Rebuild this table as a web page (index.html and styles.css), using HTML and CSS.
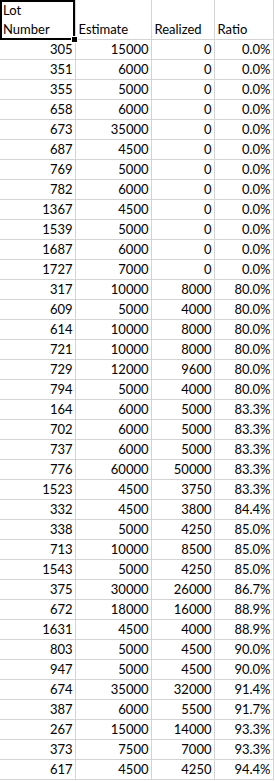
FILE: index.html
```html
<!DOCTYPE html>
<html>
<head>
<meta charset="utf-8">
<link rel="stylesheet" href="styles.css">
</head>
<body>
<div class="sheet">
<table class="grid">
<colgroup><col class="c-a"><col class="c-b"><col class="c-c"><col class="c-d"></colgroup>
<thead>
<tr><th>Lot<br>Number</th><th>Estimate</th><th>Realized</th><th>Ratio</th></tr>
</thead>
<tbody>
<tr><td>305</td><td>15000</td><td>0</td><td>0.0%</td></tr>
<tr><td>351</td><td>6000</td><td>0</td><td>0.0%</td></tr>
<tr><td>355</td><td>5000</td><td>0</td><td>0.0%</td></tr>
<tr><td>658</td><td>6000</td><td>0</td><td>0.0%</td></tr>
<tr><td>673</td><td>35000</td><td>0</td><td>0.0%</td></tr>
<tr><td>687</td><td>4500</td><td>0</td><td>0.0%</td></tr>
<tr><td>769</td><td>5000</td><td>0</td><td>0.0%</td></tr>
<tr><td>782</td><td>6000</td><td>0</td><td>0.0%</td></tr>
<tr><td>1367</td><td>4500</td><td>0</td><td>0.0%</td></tr>
<tr><td>1539</td><td>5000</td><td>0</td><td>0.0%</td></tr>
<tr><td>1687</td><td>6000</td><td>0</td><td>0.0%</td></tr>
<tr><td>1727</td><td>7000</td><td>0</td><td>0.0%</td></tr>
<tr><td>317</td><td>10000</td><td>8000</td><td>80.0%</td></tr>
<tr><td>609</td><td>5000</td><td>4000</td><td>80.0%</td></tr>
<tr><td>614</td><td>10000</td><td>8000</td><td>80.0%</td></tr>
<tr><td>721</td><td>10000</td><td>8000</td><td>80.0%</td></tr>
<tr><td>729</td><td>12000</td><td>9600</td><td>80.0%</td></tr>
<tr><td>794</td><td>5000</td><td>4000</td><td>80.0%</td></tr>
<tr><td>164</td><td>6000</td><td>5000</td><td>83.3%</td></tr>
<tr><td>702</td><td>6000</td><td>5000</td><td>83.3%</td></tr>
<tr><td>737</td><td>6000</td><td>5000</td><td>83.3%</td></tr>
<tr><td>776</td><td>60000</td><td>50000</td><td>83.3%</td></tr>
<tr><td>1523</td><td>4500</td><td>3750</td><td>83.3%</td></tr>
<tr><td>332</td><td>4500</td><td>3800</td><td>84.4%</td></tr>
<tr><td>338</td><td>5000</td><td>4250</td><td>85.0%</td></tr>
<tr><td>713</td><td>10000</td><td>8500</td><td>85.0%</td></tr>
<tr><td>1543</td><td>5000</td><td>4250</td><td>85.0%</td></tr>
<tr><td>375</td><td>30000</td><td>26000</td><td>86.7%</td></tr>
<tr><td>672</td><td>18000</td><td>16000</td><td>88.9%</td></tr>
<tr><td>1631</td><td>4500</td><td>4000</td><td>88.9%</td></tr>
<tr><td>803</td><td>5000</td><td>4500</td><td>90.0%</td></tr>
<tr><td>947</td><td>5000</td><td>4500</td><td>90.0%</td></tr>
<tr><td>674</td><td>35000</td><td>32000</td><td>91.4%</td></tr>
<tr><td>387</td><td>6000</td><td>5500</td><td>91.7%</td></tr>
<tr><td>267</td><td>15000</td><td>14000</td><td>93.3%</td></tr>
<tr><td>373</td><td>7500</td><td>7000</td><td>93.3%</td></tr>
<tr><td>617</td><td>4500</td><td>4250</td><td>94.4%</td></tr>
</tbody>
</table>
<div class="selection"></div>
<div class="handle"></div>
</div>
</body>
</html>
```
FILE: styles.css
```css
html, body {
  margin: 0;
  padding: 0;
  background: #ffffff;
}
.sheet {
  position: relative;
  width: 275px;
  font-family: Lato, "Open Sans", sans-serif;
  font-size: 13px;
  color: #000000;
}
.grid {
  border-collapse: collapse;
  table-layout: fixed;
  width: 273px;
}
.c-a { width: 75px; }
.c-b { width: 76px; }
.c-c { width: 63px; }
.c-d { width: 59px; }
.grid th,
.grid td {
  border-right: 1px solid #d4d4d4;
  border-bottom: 1px solid #d4d4d4;
  padding: 0;
  line-height: 19px;
  white-space: nowrap;
  overflow: hidden;
}
.grid th {
  height: 39px;
  font-weight: normal;
  text-align: left;
  vertical-align: bottom;
  padding-left: 3px;
}
.grid td {
  height: 19px;
  text-align: right;
  vertical-align: bottom;
  padding-right: 2px;
}
.selection {
  position: absolute;
  left: 0;
  top: 0;
  width: 75px;
  height: 40px;
  box-sizing: border-box;
  border: 2px solid #000000;
}
.handle {
  position: absolute;
  left: 72px;
  top: 37px;
  width: 5px;
  height: 5px;
  background: #000000;
  outline: 1px solid #ffffff;
}
```
